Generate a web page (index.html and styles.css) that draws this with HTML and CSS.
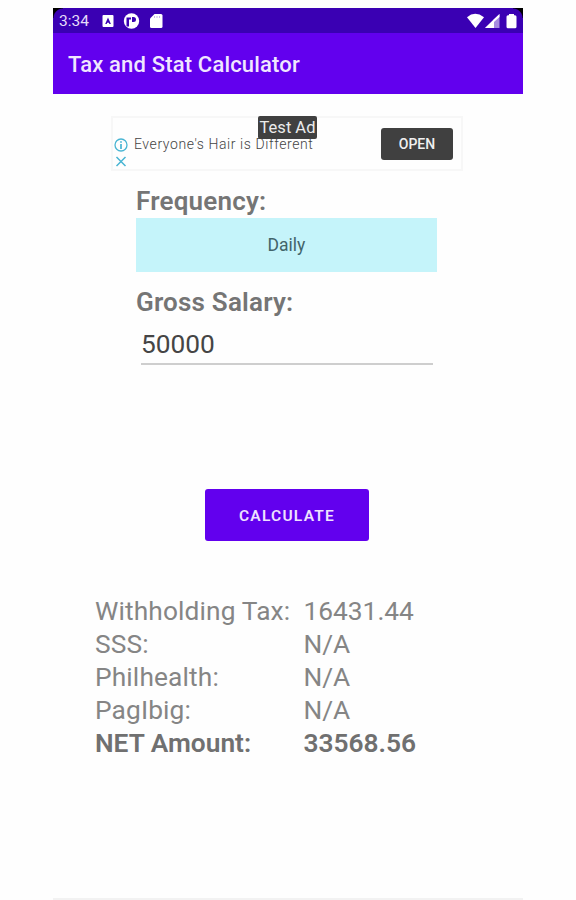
FILE: index.html
```html
<!DOCTYPE html>
<html lang="en">
<head>
<meta charset="utf-8">
<title>Tax and Stat Calculator</title>
<link rel="stylesheet" href="styles.css">
</head>
<body>
<main class="phone">
  <div class="status">
    <span class="time">3:34</span>
    <svg class="notif" width="64" height="16" viewBox="0 0 64 16" fill="#fff">
      <path fill-rule="evenodd" d="M2.500 2h9a1 1 0 0 1 1 1v10a1 1 0 0 1-1 1h-9a1 1 0 0 1-1-1V3a1 1 0 0 1 1-1zM7 4.500L4.200 11h1.500l.5-1.300h1.700l.5 1.300h1.500z"/>
      <circle cx="30.500" cy="8" r="7.700"/>
      <path d="M25.500 4.500h4.500v2h-2v7h-2.500zM31 4h1.500a2.500 2.500 0 0 1 0 5H31z" fill="#3a00b3"/>
      <path d="M53.500 1H60a1.500 1.500 0 0 1 1.500 1.500v11A1.500 1.500 0 0 1 60 15H50.500a1.500 1.500 0 0 1-1.500-1.500V5.500z"/>
      <path d="M53.500 3v2M56 3v2M58.500 3v2" stroke="#c9b8ec" stroke-width="1"/>
    </svg>
    <svg class="system" width="50" height="16" viewBox="0 0 50 16" fill="#fff">
      <path d="M0 4.200Q8 -2.500 17 4.200L8.500 15z"/>
      <path d="M18 15L32.500 1v14z" fill="#a68ce0"/>
      <path d="M18 15L27 6.200V15zM26 7L32.500 1v3L27 9z"/>
      <path d="M42 1h5v1.200h1a1.500 1.500 0 0 1 1.500 1.500v10A1.500 1.500 0 0 1 48 15.200h-7a1.500 1.500 0 0 1-1.500-1.500v-10A1.500 1.500 0 0 1 41 2.200h1z"/>
    </svg>
  </div>
  <header class="appbar"><h1>Tax and Stat Calculator</h1></header>

  <section class="ad">
    <svg class="adchoice" width="14" height="30" viewBox="0 0 14 30" fill="none" stroke="#49b5d3" stroke-width="1.300">
      <circle cx="7" cy="7" r="6"/>
      <path d="M7 6v5M7 3.200v1.600" stroke-width="1.700"/>
      <path d="M2.500 19l9 9M11.500 19l-9 9" stroke-width="1.500"/>
    </svg>
    <span class="adtext">Everyone's Hair is Different</span>
    <span class="adopen">OPEN</span>
    <span class="adtest">Test Ad</span>
  </section>

  <section class="form">
    <div class="label freq">Frequency:</div>
    <div class="spinner">Daily</div>
    <div class="label gross">Gross Salary:</div>
    <div class="field"><span>50000</span></div>
  </section>

  <button class="calc">CALCULATE</button>

  <section class="results">
    <span class="name">Withholding Tax:</span><span>16431.44</span>
    <span class="name">SSS:</span><span>N/A</span>
    <span class="name">Philhealth:</span><span>N/A</span>
    <span class="name">PagIbig:</span><span>N/A</span>
    <span class="net">NET Amount:</span><span class="net">33568.56</span>
  </section>
  <div class="end"></div>
</main>
</body>
</html>
```
FILE: styles.css
```css
* { box-sizing: border-box; }
body {
  margin: 0;
  height: 900px;
  overflow: hidden;
  background: #fefefe;
  font-family: Roboto, "Liberation Sans", sans-serif;
  color: #757575;
}
.phone {
  width: 469.500px;
  height: 892px;
  margin: 8px 0 0 53px;
  display: flex;
  flex-direction: column;
}
.status {
  height: 25px;
  flex: none;
  display: flex;
  align-items: center;
  padding: 0 6px 0 6px;
  background:
    radial-gradient(circle at 100% 100%, transparent 9px, #000 10px) 0 0 / 10px 10px no-repeat,
    radial-gradient(circle at 0 100%, transparent 9px, #000 10px) 100% 0 / 10px 10px no-repeat,
    #3a00b3;
}
.time { width: 42px; font-size: 15.500px; color: #e6dcfa; }
.notif { flex: none; }
.system { flex: none; margin-left: auto; }
.appbar {
  height: 61px;
  flex: none;
  display: flex;
  align-items: center;
  padding: 2px 0 0 15px;
  background: #6200ee;
}
h1 { margin: 0; font-size: 22px; font-weight: 500; letter-spacing: 0.170px; color: #f0e6ff; white-space: nowrap; }
.ad {
  position: relative;
  width: 352px;
  height: 55px;
  flex: none;
  margin: 22px 0 0 58px;
  border: 2px solid #f7f7f7;
  display: flex;
  align-items: center;
  background: #fefefe;
}
.adchoice { margin: 20px 0 0 1px; align-self: flex-start; }
.adtext {
  width: 180px;
  margin-left: 6px;
  font: 300 14px/18px Roboto, sans-serif;
  letter-spacing: 0.580px;
  color: #444;
  white-space: nowrap;
}
.adopen {
  width: 72px;
  height: 32px;
  margin-left: 67px;
  border-radius: 3px;
  background: #404040;
  color: #f0f0f0;
  font: 500 14px/32px Roboto, sans-serif;
  text-align: center;
}
.adtest {
  position: absolute;
  left: 145px;
  top: -2px;
  width: 59px;
  height: 23px;
  border-radius: 2px;
  background: #404040;
  color: #ececec;
  font-size: 16.500px;
  line-height: 24px;
  text-align: center;
  white-space: nowrap;
}
.form { width: 301px; flex: none; margin: 13px 0 0 83px; }
.label { height: 34px; font-size: 26px; line-height: 34px; font-weight: 600; letter-spacing: 0.200px; white-space: nowrap; }
.spinner {
  height: 54px;
  background: #c5f4fa;
  color: #42646a;
  font-size: 17.500px;
  line-height: 55px;
  text-align: center;
}
.gross { margin-top: 13px; }
.field {
  height: 46px;
  margin: 0 4px 0 5px;
  border-bottom: 2px solid #cecece;
  color: #454545;
  font-size: 26.300px;
  line-height: 50px;
}
.field span { display: block; height: 44px; }
.calc {
  width: 164px;
  height: 52px;
  flex: none;
  margin: 124px 0 0 152px;
  padding: 2px 0 0;
  border: 0;
  border-radius: 3px;
  background: #6200ee;
  color: #eee2ff;
  font: 600 15.500px/50px Roboto, sans-serif;
  letter-spacing: 1.250px;
}
.results {
  flex: none;
  margin: 54px 0 0 42px;
  display: grid;
  grid-template-columns: 208.500px 120px;
  grid-template-rows: 33px 33px 33px 33px 32px;
  font-size: 26.300px;
  font-weight: 400;
  line-height: 33px;
  color: #858585;
  white-space: nowrap;
}
.name { letter-spacing: 0.130px; }
.net { font-weight: 600; line-height: 32px; color: #707070; }
.end { margin-top: auto; height: 2px; background: #f2f2f2; flex: none; }
```
